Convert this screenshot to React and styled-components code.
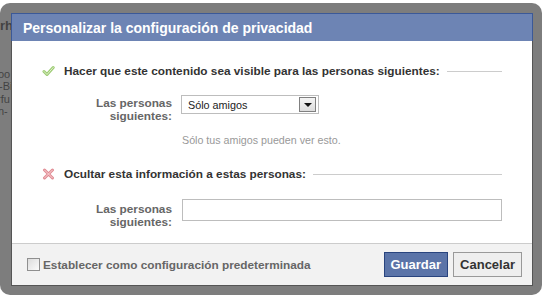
import React from "react";
import styled, { createGlobalStyle } from "styled-components";

const GlobalStyle = createGlobalStyle`
  html, body {
    margin: 0;
    padding: 0;
    background: #fff;
    overflow: hidden;
  }
  body {
    font-family: "Liberation Sans", Arial, sans-serif;
  }
`;

const Page = styled.div`
  position: relative;
  width: 544px;
  height: 297px;
  overflow: hidden;
  background: #fff;
`;

// page content that peeks out from behind the dialog frame
const Backdrop = styled.div`
  display: flex;
  flex-direction: column;
  padding-top: 20px;
  font-size: 11px;
  line-height: 12.5px;
  color: #111;
`;

const BackLine = styled.div`
  white-space: nowrap;
  margin-left: ${props => props.shift || 0}px;
  margin-top: ${props => props.gap || 0}px;
  font-weight: ${props => (props.bold ? "bold" : "normal")};
  font-size: ${props => (props.bold ? 13 : 11)}px;
`;

const Frame = styled.div`
  position: absolute;
  top: 3px;
  left: 0;
  width: 542px;
  height: 292px;
  box-sizing: border-box;
  padding: 10px 9px 9px 11px;
  background: rgba(82, 82, 82, 0.75);
  border-radius: 10px;
`;

const Dialog = styled.div`
  height: 100%;
  box-sizing: border-box;
  display: flex;
  flex-direction: column;
  background: #fff;
  border: 1px solid #555;
  border-top: none;
`;

const Header = styled.h2`
  margin: 0 -1px;
  height: 28px;
  box-sizing: border-box;
  display: flex;
  align-items: center;
  padding: 0 0 0 11px;
  background: #6d84b4;
  border: 1px solid #3b5998;
  border-bottom: none;
  color: #fff;
  font-size: 14px;
  font-weight: bold;
`;

const Body = styled.div`
  flex: 1;
  padding: 23px 30px 0 30px;
`;

const SectionTitle = styled.div`
  display: flex;
  align-items: center;
  height: 14px;
  margin-top: ${props => props.gap || 0}px;
  color: #333;
  font-size: 11.8px;
  font-weight: bold;
`;

const IconBox = styled.span`
  width: 13px;
  height: 12px;
  margin-right: 9px;
  display: inline-flex;
`;

const Rule = styled.span`
  flex: 1;
  height: 1px;
  margin-left: 7px;
  background: #ccc;
`;

const FieldRow = styled.div`
  display: flex;
  align-items: flex-start;
  gap: ${props => props.gap}px;
  margin-top: ${props => props.gap2}px;
`;

const FieldLabel = styled.div`
  width: 130px;
  flex: none;
  text-align: right;
  padding-top: ${props => props.offset}px;
  color: #666;
  font-size: 11.8px;
  font-weight: bold;
  line-height: 13px;
`;

const SelectBox = styled.div`
  width: 138px;
  height: 19px;
  box-sizing: border-box;
  display: flex;
  align-items: center;
  justify-content: space-between;
  padding: 0 2px 0 6px;
  border: 1px solid #bdbdbd;
  background: #fff;
  color: #222;
  font-size: 10.8px;
`;

const ArrowButton = styled.span`
  width: 17px;
  height: 15px;
  box-sizing: border-box;
  display: flex;
  align-items: center;
  justify-content: center;
  border: 1px solid #808080;
  background: linear-gradient(#f4f4f4, #dcdcdc);

  &::after {
    content: "";
    border-left: 4px solid transparent;
    border-right: 4px solid transparent;
    border-top: 4px solid #111;
    margin-top: 1px;
  }
`;

const TextInput = styled.div`
  width: 320px;
  height: 22px;
  box-sizing: border-box;
  border: 1px solid #bdbdbd;
  background: #fff;
`;

const Hint = styled.div`
  margin: 11px 0 0 140px;
  color: #999;
  font-size: 10.7px;
  line-height: 13px;
`;

const Footer = styled.div`
  height: 42px;
  box-sizing: border-box;
  display: flex;
  align-items: center;
  justify-content: space-between;
  padding: 0 10px 0 15px;
  background: #f2f2f2;
  border-top: 1px solid #ccc;
`;

const CheckLabel = styled.label`
  display: flex;
  align-items: center;
  gap: 3px;
  color: #666;
  font-size: 11.8px;
  font-weight: bold;
`;

const CheckSquare = styled.span`
  width: 13px;
  height: 13px;
  box-sizing: border-box;
  border: 1px solid #8f8f8f;
  background: linear-gradient(135deg, #dcdcdc, #fbfbfb);
`;

const Buttons = styled.div`
  display: flex;
  gap: 5px;
`;

const Button = styled.button`
  height: 25px;
  box-sizing: border-box;
  padding: 0 6px;
  font-family: "Liberation Sans", Arial, sans-serif;
  font-size: 13px;
  font-weight: bold;
  color: ${props => (props.primary ? "#fff" : "#333")};
  background: ${props => (props.primary ? "#5b74a8" : "#eeeeee")};
  border: 1px solid ${props => (props.primary ? "#29447e" : "#999")};
  border-radius: 0;
`;

const CheckIcon = () => (
  <svg width="13" height="12" viewBox="0 0 13 12">
    <path
      d="M2 6.5 L5 9.5 L11.2 2.5"
      fill="none"
      stroke="#9ccb73"
      strokeWidth="3"
      strokeLinecap="round"
      strokeLinejoin="round"
    />
    <path
      d="M2 6.5 L5 9.5 L11.2 2.5"
      fill="none"
      stroke="#e2f2cc"
      strokeWidth="1"
      strokeLinecap="round"
      strokeLinejoin="round"
    />
  </svg>
);

const CrossIcon = () => (
  <svg width="13" height="12" viewBox="0 0 13 12">
    <path
      d="M2.5 2 L10.5 10 M10.5 2 L2.5 10"
      fill="none"
      stroke="#e08a92"
      strokeWidth="3"
      strokeLinecap="round"
    />
    <path
      d="M2.5 2 L10.5 10 M10.5 2 L2.5 10"
      fill="none"
      stroke="#fbd7da"
      strokeWidth="1"
      strokeLinecap="round"
    />
  </svg>
);

const App = () => (
  <Page>
    <GlobalStyle />
    <Backdrop>
      <BackLine bold>rh</BackLine>
      <BackLine gap={35} shift={-2}>oo</BackLine>
      <BackLine shift={-1}>-Bi</BackLine>
      <BackLine shift={-3}>rfu</BackLine>
      <BackLine shift={-2}>n-</BackLine>
    </Backdrop>

    <Frame>
      <Dialog>
        <Header>Personalizar la configuración de privacidad</Header>
        <Body>
          <SectionTitle>
            <IconBox>
              <CheckIcon />
            </IconBox>
            Hacer que este contenido sea visible para las personas siguientes:
            <Rule />
          </SectionTitle>
          <FieldRow gap={9} gap2={17}>
            <FieldLabel offset={2}>
              Las personas
              <br />
              siguientes:
            </FieldLabel>
            <SelectBox>
              Sólo amigos
              <ArrowButton />
            </SelectBox>
          </FieldRow>
          <Hint>Sólo tus amigos pueden ver esto.</Hint>

          <SectionTitle gap={20}>
            <IconBox>
              <CrossIcon />
            </IconBox>
            Ocultar esta información a estas personas:
            <Rule />
          </SectionTitle>
          <FieldRow gap={10} gap2={18}>
            <FieldLabel offset={4}>
              Las personas
              <br />
              siguientes:
            </FieldLabel>
            <TextInput />
          </FieldRow>
        </Body>
        <Footer>
          <CheckLabel>
            <CheckSquare />
            Establecer como configuración predeterminada
          </CheckLabel>
          <Buttons>
            <Button primary>Guardar</Button>
            <Button>Cancelar</Button>
          </Buttons>
        </Footer>
      </Dialog>
    </Frame>
  </Page>
);

export default App;
